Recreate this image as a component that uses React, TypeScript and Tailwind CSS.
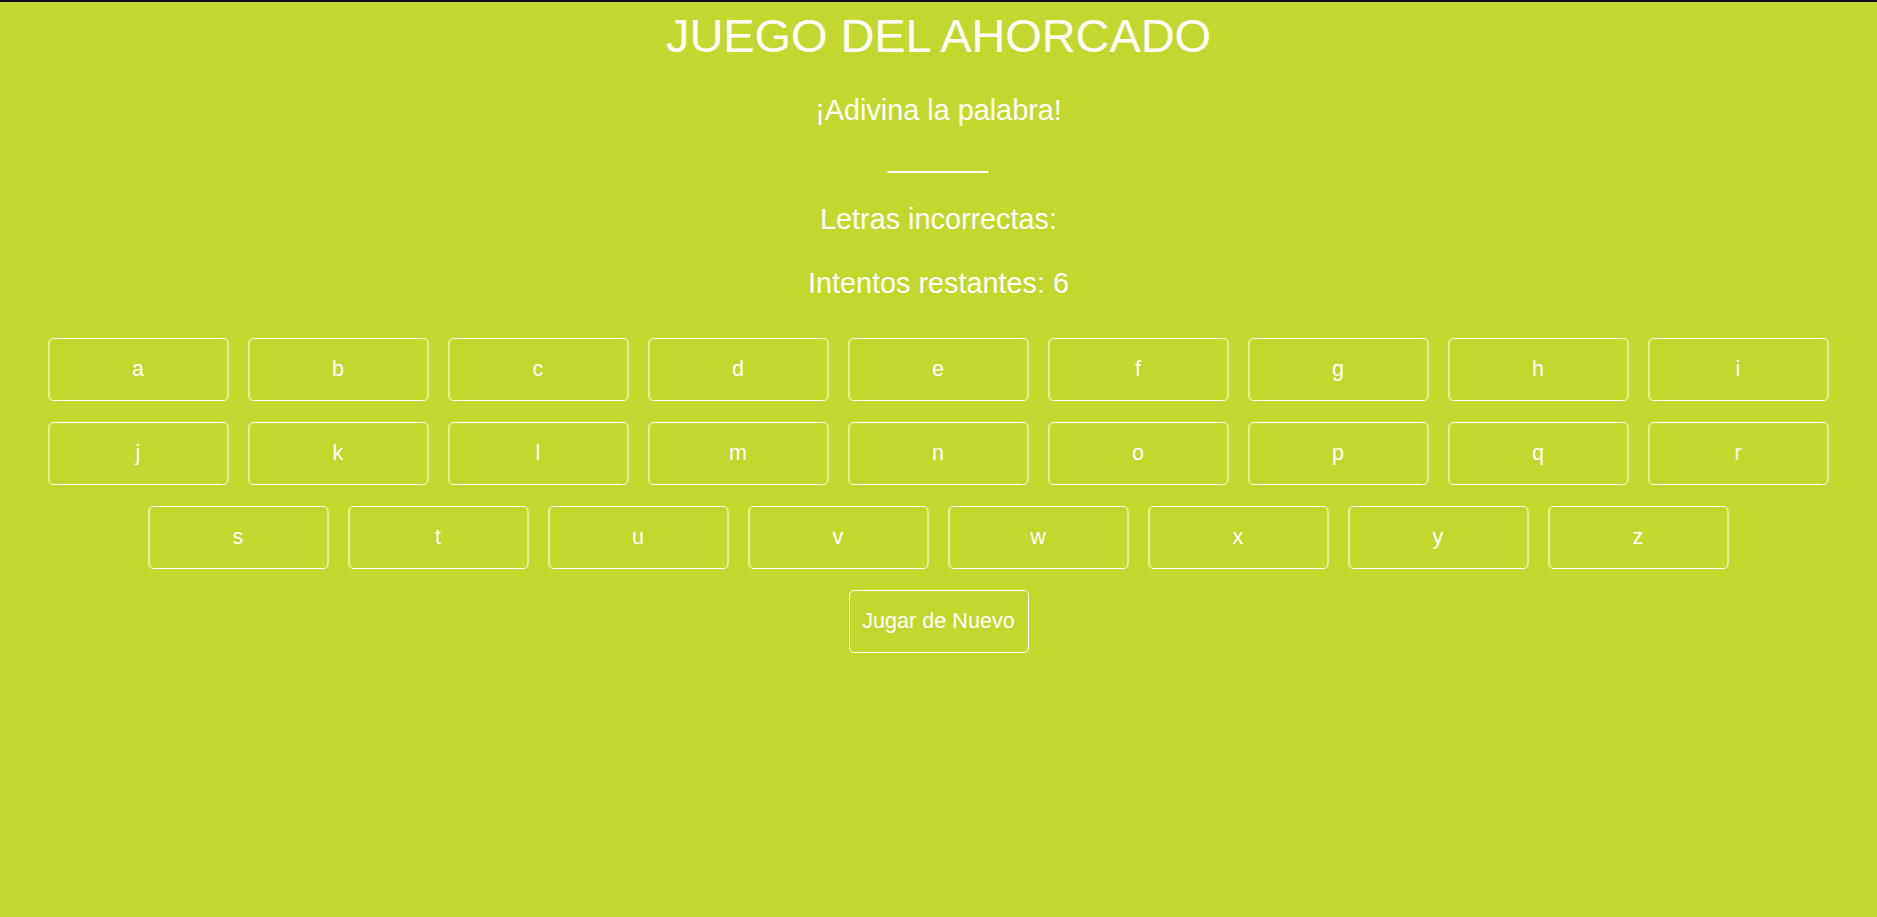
import React from "react";

const letters = "abcdefghijklmnopqrstuvwxyz".split("");

export default function App() {
  return (
    <div className="min-h-screen bg-[#c2d82e] border-t-2 border-[#111111] text-white font-['Liberation_Sans',Arial,sans-serif] flex flex-col items-center">
      <h1 className="mt-[6px] h-[56px] leading-[56px] text-[47px] tracking-[-0.1px] font-normal whitespace-nowrap">
        JUEGO DEL AHORCADO
      </h1>
      <p className="mt-[29px] h-[34px] leading-[34px] text-[28.8px]">¡Adivina la palabra!</p>
      <p className="mt-[13px] h-[34px] leading-[34px] text-[28.8px] tracking-[0.8px]">______</p>
      <p className="mt-[28px] h-[34px] leading-[34px] text-[28.8px]">Letras incorrectas:</p>
      <p className="mt-[30px] h-[34px] leading-[34px] text-[28.8px]">Intentos restantes: 6</p>
      <div className="mt-[38px] w-[1780px] flex flex-wrap justify-center gap-x-[20px] gap-y-[21px] -translate-x-[0.5px]">
        {letters.map((l) => (
          <button
            key={l}
            className="w-[180px] h-[63px] border border-white rounded-[5px] bg-transparent text-white text-[21.6px] flex items-center justify-center"
          >
            {l}
          </button>
        ))}
      </div>
      <button className="mt-[21px] w-[180px] h-[63px] border border-white rounded-[5px] bg-transparent text-white text-[21.6px] flex items-center justify-center">
        Jugar de Nuevo
      </button>
    </div>
  );
}
